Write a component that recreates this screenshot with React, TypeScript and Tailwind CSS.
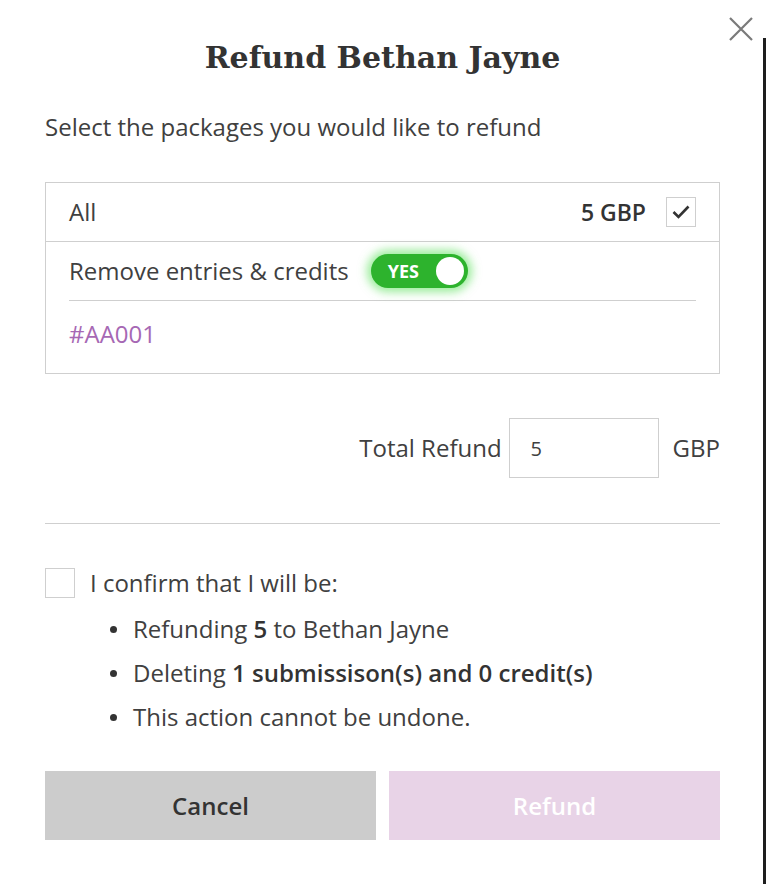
import { useState } from 'react'

const body = { fontFamily: '"Open Sans", "Liberation Sans", sans-serif' }
const serif = { fontFamily: '"DejaVu Serif", "Liberation Serif", serif' }

export default function App() {
  const [allChecked, setAllChecked] = useState(true)
  const [removeEntries, setRemoveEntries] = useState(true)
  const [confirmed, setConfirmed] = useState(false)
  const [amount, setAmount] = useState('5')

  return (
    <div className="flex h-[884px] w-[766px] bg-white text-[#404040]" style={body}>
      <div className="relative flex w-[763px] flex-col pl-[45px] pr-[43px] pt-[36px]">
        <button
          type="button"
          className="absolute right-[10px] top-[17px] text-[#7a7a7a]"
          aria-label="Close"
        >
          <svg width="24" height="24" viewBox="0 0 24 24" fill="none" stroke="currentColor" strokeWidth="2.2">
            <path d="M1 1L23 23M23 1L1 23" />
          </svg>
        </button>

        <h1 className="text-center text-[30px] font-bold leading-[44px] text-[#333]" style={serif}>
          Refund Bethan Jayne
        </h1>

        <p className="mt-[32px] text-[24px] leading-[30px]">
          Select the packages you would like to refund
        </p>

        <div className="mt-[40px] border border-[#cfcfcf]">
          <div className="flex h-[59px] items-center border-b border-[#cfcfcf] pl-[23px] pr-[23px]">
            <span className="text-[24px]">All</span>
            <span className="ml-auto text-[23px] font-semibold text-[#333]">5 GBP</span>
            <button
              type="button"
              onClick={() => setAllChecked(!allChecked)}
              className="ml-[20px] flex h-[30px] w-[30px] items-center justify-center border border-[#cfcfcf] bg-white"
            >
              {allChecked ? (
                <svg width="18" height="14" viewBox="0 0 18 14" fill="none" stroke="#333" strokeWidth="2.6">
                  <path d="M1.5 7L6.5 12L16.5 1.5" />
                </svg>
              ) : null}
            </button>
          </div>

          <div className="px-[23px]">
            <div className="flex h-[59px] items-center border-b border-[#cfcfcf]">
              <span className="text-[24px]">Remove entries &amp; credits</span>
              <button
                type="button"
                onClick={() => setRemoveEntries(!removeEntries)}
                className={
                  removeEntries
                    ? 'ml-[22px] flex h-[34px] w-[97px] items-center justify-between rounded-full bg-[#2db32d] pl-[17px] pr-[4px] shadow-[0_0_10px_4px_rgba(70,220,70,0.55)]'
                    : 'ml-[22px] flex h-[34px] w-[97px] items-center justify-between rounded-full bg-[#bbbbbb] pl-[4px] pr-[17px]'
                }
              >
                {removeEntries ? (
                  <>
                    <span className="text-[18px] font-bold text-white">YES</span>
                    <span className="h-[28px] w-[28px] rounded-full bg-white" />
                  </>
                ) : (
                  <>
                    <span className="h-[28px] w-[28px] rounded-full bg-white" />
                    <span className="text-[18px] font-bold text-white">NO</span>
                  </>
                )}
              </button>
            </div>
            <div className="h-[72px] pt-[18px] text-[24px] leading-[30px] text-[#a668b4]">#AA001</div>
          </div>
        </div>

        <div className="mt-[44px] flex items-center justify-end">
          <span className="text-[24px]">Total Refund</span>
          <input
            value={amount}
            onChange={(e) => setAmount(e.target.value)}
            className="ml-[7px] h-[60px] w-[150px] border border-[#cfcfcf] px-[21px] text-[20px] text-[#404040] outline-none"
          />
          <span className="ml-[14px] text-[24px]">GBP</span>
        </div>

        <div className="mt-[45px] border-t border-[#cfcfcf]" />

        <div className="mt-[44px] flex items-center">
          <button
            type="button"
            onClick={() => setConfirmed(!confirmed)}
            className="flex h-[30px] w-[30px] items-center justify-center border border-[#cfcfcf] bg-white"
          >
            {confirmed ? (
              <svg width="18" height="14" viewBox="0 0 18 14" fill="none" stroke="#333" strokeWidth="2.6">
                <path d="M1.5 7L6.5 12L16.5 1.5" />
              </svg>
            ) : null}
          </button>
          <span className="ml-[15px] text-[24px] leading-[30px]">I confirm that I will be:</span>
        </div>

        <ul className="mt-[9px] pl-[65px] text-[24px] leading-[44px]">
          <li className="flex items-center gap-[16px]">
            <span className="h-[7px] w-[7px] rounded-full bg-[#333]" />
            <span>
              Refunding <b className="font-semibold text-[#333]">{amount}</b> to Bethan Jayne
            </span>
          </li>
          <li className="flex items-center gap-[16px]">
            <span className="h-[7px] w-[7px] rounded-full bg-[#333]" />
            <span>
              Deleting <b className="font-semibold text-[#333]">1 submissison(s) and 0 credit(s)</b>
            </span>
          </li>
          <li className="flex items-center gap-[16px]">
            <span className="h-[7px] w-[7px] rounded-full bg-[#333]" />
            <span>This action cannot be undone.</span>
          </li>
        </ul>

        <div className="mt-[32px] flex gap-[13px]">
          <button
            type="button"
            className="h-[69px] flex-1 bg-[#cccccc] text-[24px] font-semibold text-[#333]"
          >
            Cancel
          </button>
          <button
            type="button"
            disabled={!confirmed}
            className={
              confirmed
                ? 'h-[69px] flex-1 bg-[#a668b4] text-[24px] font-semibold text-white'
                : 'h-[69px] flex-1 bg-[#e8d3e7] text-[24px] font-semibold text-white'
            }
          >
            Refund
          </button>
        </div>
      </div>

      <div className="flex w-[3px] flex-col">
        <div className="h-[38px] bg-white" />
        <div className="flex-1 bg-[#1e1e1e]" />
      </div>
    </div>
  )
}
